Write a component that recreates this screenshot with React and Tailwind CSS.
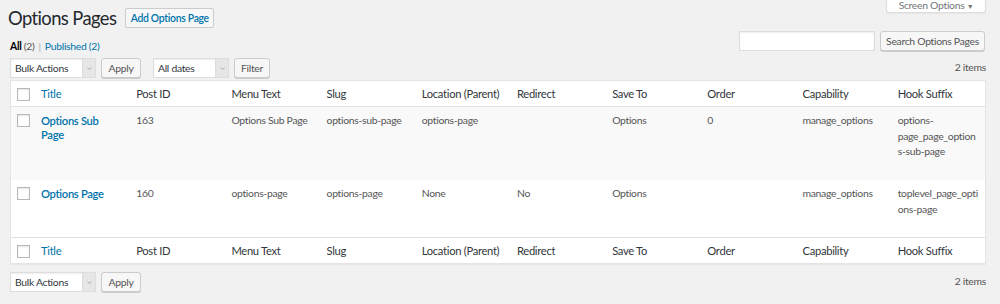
import React from "react";

const columns = ["Post ID", "Menu Text", "Slug", "Location (Parent)", "Redirect", "Save To", "Order", "Capability", "Hook Suffix"];

const rows = [
  {
    title: ["Options Sub", "Page"],
    cells: ["163", "Options Sub Page", "options-sub-page", "options-page", "", "Options", "0", "manage_options", ["options-", "page_page_option", "s-sub-page"]],
    rowClass: "bg-[#f9f9f9] h-[73px]",
  },
  {
    title: ["Options Page"],
    cells: ["160", "options-page", "options-page", "None", "No", "Options", "", "manage_options", ["toplevel_page_opti", "ons-page"]],
    rowClass: "bg-white h-[57px]",
  },
];

const Checkbox = () => (
  <span className="block w-[13px] h-[13px] border border-[#b4b9be] bg-white shadow-[inset_0_1px_2px_rgba(0,0,0,0.1)]" />
);

const Select = ({ label, className }) => (
  <div className={`flex h-[20px] border border-[#ddd] bg-white shadow-[inset_0_1px_2px_rgba(0,0,0,0.07)] ${className}`}>
    <span className="flex-1 pl-[4px] leading-[18px] text-[10.4px] text-[#32373c] whitespace-nowrap">{label}</span>
    <span className="flex w-[13px] items-center justify-center bg-[#e6e6e6] border-l border-[#ddd]">
      <svg width="5" height="3" viewBox="0 0 5 3">
        <path d="M0.5 0.5 L2.5 2.5 L4.5 0.5" fill="none" stroke="#9a9a9a" strokeWidth="0.8" />
      </svg>
    </span>
  </div>
);

const Button = ({ children, className }) => (
  <button
    type="button"
    className={`h-[20px] rounded-[3px] border border-[#ccc] bg-[#f7f7f7] text-[10.4px] leading-[18px] text-[#555] shadow-[0_1px_0_#ccc] whitespace-nowrap ${className}`}
  >
    {children}
  </button>
);

const HeaderRow = ({ border }) => (
  <tr className="bg-white">
    <th className={`pl-[6px] pt-[7px] align-top ${border}`}>
      <Checkbox />
    </th>
    <th className={`px-[8px] pt-[6px] pb-[5px] text-left font-normal text-[11.2px] leading-[14px] text-[#0073aa] align-top ${border}`}>
      Title
    </th>
    {columns.map((c) => (
      <th
        key={c}
        className={`px-[8px] pt-[6px] pb-[5px] text-left font-normal text-[11.2px] leading-[14px] text-[#32373c] whitespace-nowrap align-top ${border}`}
      >
        {c}
      </th>
    ))}
  </tr>
);

const TableNav = ({ showDates }) => (
  <div className="flex h-[20px] items-center">
    <Select label="Bulk Actions" className="w-[86px]" />
    <Button className="ml-[5px] w-[40px]">Apply</Button>
    {showDates && (
      <>
        <Select label="All dates" className="ml-[12px] w-[76px]" />
        <Button className="ml-[5px] w-[36px]">Filter</Button>
      </>
    )}
    <span className="ml-auto text-[10.4px] text-[#555]">2 items</span>
  </div>
);

export default function App() {
  return (
    <div className="relative h-[304px] w-full overflow-hidden bg-[#f1f1f1] pl-[10px] pr-[14px] font-[Lato,sans-serif] tracking-[-0.3px]">
      <div className="absolute top-0 right-[14px] flex h-[13px] w-[100px] justify-center rounded-b-[3px] border border-t-0 border-[#ddd] bg-white shadow-[0_1px_1px_rgba(0,0,0,0.04)]">
        <span className="-mt-[2px] text-[10.4px] leading-[14px] text-[#72777c]">
          Screen Options <span className="text-[7px] text-[#72777c]">▼</span>
        </span>
      </div>

      <div className="mt-[8px] flex h-[20px] items-center">
        <h1 className="-ml-[2px] text-[18.4px] font-normal leading-[24px] tracking-[-0.6px] text-[#23282d]">Options Pages</h1>
        <button
          type="button"
          className="ml-[9px] h-[20px] w-[89px] rounded-[2px] border border-[#ccc] bg-[#f7f7f7] text-[10.4px] font-semibold leading-[18px] text-[#0073aa]"
        >
          Add Options Page
        </button>
      </div>

      <div className="mt-[3px] flex h-[20px] justify-between">
        <div className="pt-[8px] text-[10.4px] leading-[14px]">
          <span className="font-bold text-black">All</span> <span className="text-[#555]">(2)</span>
          <span className="mx-[4px] text-[#aaa]">|</span>
          <span className="text-[#0073aa]">Published (2)</span>
        </div>
        <div className="mr-[1px] flex">
          <div className="h-[20px] w-[136px] border border-[#ddd] bg-white shadow-[inset_0_1px_2px_rgba(0,0,0,0.07)]" />
          <Button className="ml-[5px] w-[105px]">Search Options Pages</Button>
        </div>
      </div>

      <div className="mt-[7px]">
        <TableNav showDates />
      </div>

      <table className="mt-[2px] w-full table-fixed border-separate border-spacing-0 border border-[#e5e5e5] bg-white shadow-[0_1px_1px_rgba(0,0,0,0.04)]">
        <colgroup>
          <col className="w-[22px]" />
          <col />
          {columns.map((c) => (
            <col key={c} />
          ))}
        </colgroup>
        <thead>
          <HeaderRow border="border-b border-[#e1e1e1]" />
        </thead>
        <tbody>
          {rows.map((r, i) => (
            <tr key={i} className={r.rowClass}>
              <td className="pl-[6px] pt-[7px] align-top">
                <Checkbox />
              </td>
              <td className="px-[8px] pt-[7px] align-top">
                <a className="block text-[11.2px] font-semibold leading-[14px] text-[#0073aa]">
                  {r.title.map((t, j) => (
                    <span key={j} className="block whitespace-nowrap">
                      {t}
                    </span>
                  ))}
                </a>
              </td>
              {r.cells.map((c, j) => (
                <td key={j} className="px-[8px] pt-[6px] align-top text-[10.4px] leading-[15.5px] text-[#555]">
                  {Array.isArray(c)
                    ? c.map((line, k) => (
                        <span key={k} className="block whitespace-nowrap">
                          {line}
                        </span>
                      ))
                    : <span className="whitespace-nowrap">{c}</span>}
                </td>
              ))}
            </tr>
          ))}
        </tbody>
        <tfoot>
          <HeaderRow border="border-t border-[#e1e1e1]" />
        </tfoot>
      </table>

      <div className="mt-[8px]">
        <TableNav />
      </div>
    </div>
  );
}
